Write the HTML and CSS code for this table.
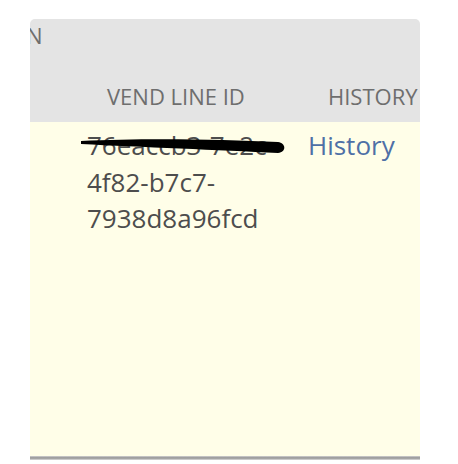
FILE: index.html
```html
<!DOCTYPE html>
<html>

<head>
    <meta charset="utf-8">
    <title>Vend lines</title>
    <link rel="stylesheet" href="styles.css">
</head>

<body>
    <div class="panel">
        <div class="grid grid-head">
            <div class="head-cell head-clipped"><span class="clipped-text">N</span></div>
            <div class="head-cell">VEND LINE ID</div>
            <div class="head-cell">HISTORY</div>
        </div>
        <div class="grid grid-body">
            <div class="cell"></div>
            <div class="cell cell-id">
                76eaccb3-7e2c-4f82-b7c7-7938d8a96fcd
                <svg class="scribble" width="212" height="20" viewBox="0 0 212 20">
                    <path d="M1 3 C 60 0, 140 1, 198 4 C 206 5, 207 14, 198 15 C 140 12, 60 9, 1 6 Z" fill="#000" />
                </svg>
            </div>
            <div class="cell"><a class="link" href="#">History</a></div>
        </div>
        <div class="scrollbar"></div>
    </div>
</body>

</html>
```

FILE: styles.css
```css
body {
    margin: 0;
    padding: 0;
    background: #fff;
    font-family: "Open Sans", "Liberation Sans", sans-serif;
}

.panel {
    margin: 19px 0 0 30px;
    width: 390px;
    height: 441px;
    display: flex;
    flex-direction: column;
    overflow: hidden;
    border-radius: 5px 5px 0 0;
}

.grid {
    display: grid;
    grid-template-columns: 45px 221px 1fr;
}

.grid-head {
    height: 103px;
    background: #e4e4e4;
    color: #6e6e6e;
    font-size: 22px;
    line-height: 30px;
}

.head-cell {
    align-self: end;
    padding: 0 0 11px 32px;
    white-space: nowrap;
}

.head-clipped {
    align-self: start;
    padding: 1px 0 0 0;
    overflow: hidden;
}

.clipped-text {
    display: inline-block;
    margin-left: -4px;
}

.grid-body {
    flex: 1;
    background: #fffee8;
    color: #4d4d4d;
    font-size: 26px;
    line-height: 36.5px;
}

.cell {
    padding: 5px 0 0 12px;
}

.cell-id {
    position: relative;
}

.scribble {
    position: absolute;
    left: 5px;
    top: 16px;
}

.link {
    color: #4e70a6;
    text-decoration: none;
}

.scrollbar {
    height: 4px;
    background: linear-gradient(#d2d2d2, #9c9c9c 40%, #a8a8a8 70%, #e2e2e2);
}
```
